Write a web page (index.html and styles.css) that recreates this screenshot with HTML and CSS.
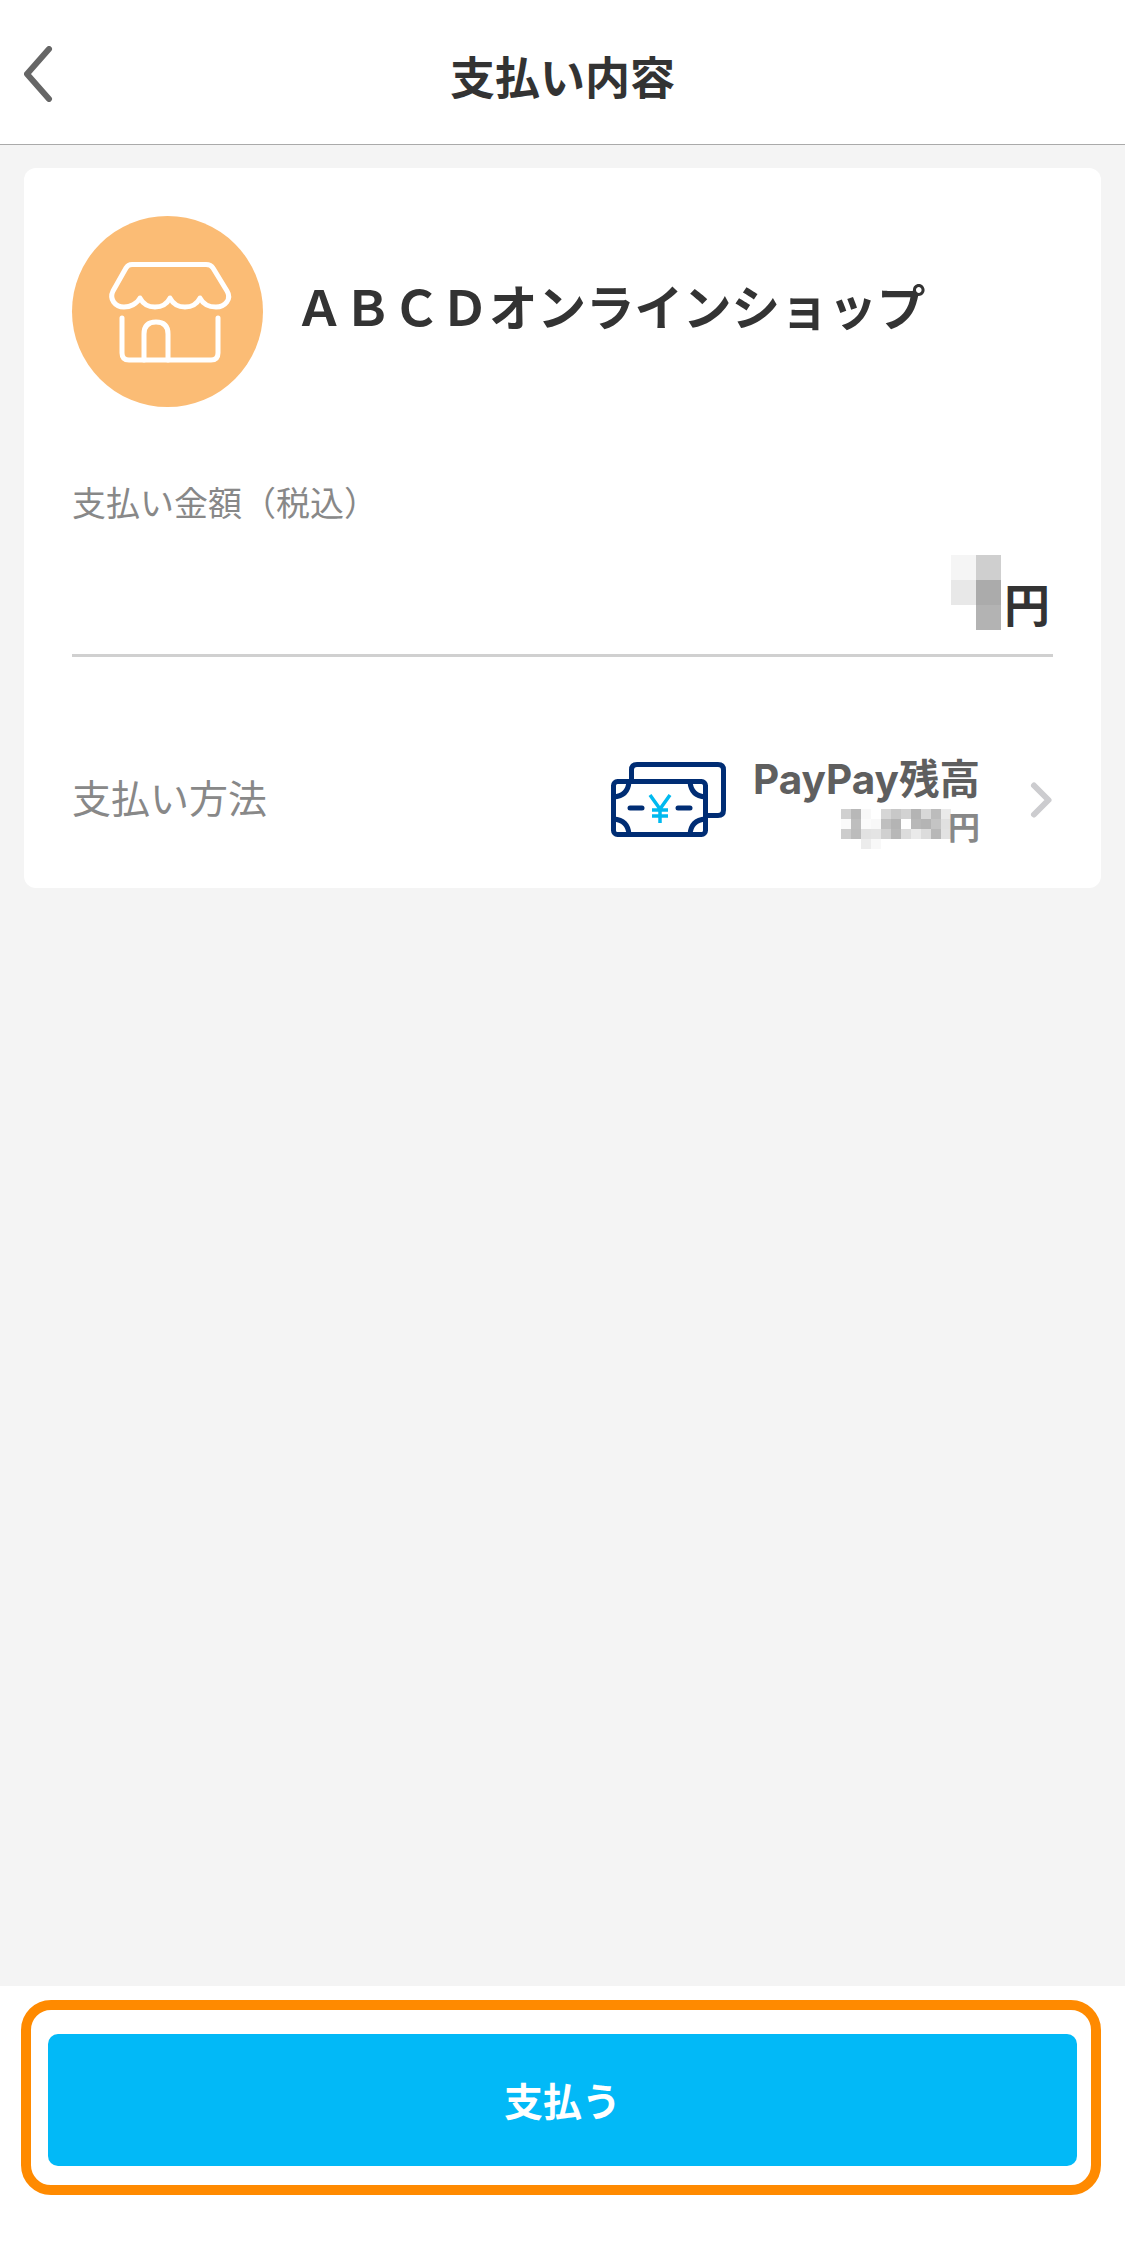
FILE: index.html
```html
<!DOCTYPE html>
<html lang="ja">
	<head>
		<title>支払い内容</title>
		<link rel="stylesheet" href="styles.css">
	</head>
	<body>
		<div class="page">
			<header class="top">
				<svg class="back" width="30" height="56" viewBox="0 0 30 56">
					<path d="M25 3 L3 28 L25 53" fill="none" stroke="#666" stroke-width="6" stroke-linecap="round" stroke-linejoin="round"/>
				</svg>
				<h1 class="title">支払い内容</h1>
			</header>

			<main class="content">
				<section class="card">
					<div class="shop">
						<div class="shop-logo">
							<svg width="191" height="191" viewBox="0 0 191 191" fill="none" stroke="#fff" stroke-width="5" stroke-linecap="round" stroke-linejoin="round">
								<path d="M60 48.5 H134 Q139 48.5 141 52 L155 75 C160 83 153 91 144 91 C137 91 131 88 128 82 C125 88 119 91 113 91 C107 91 101 88 98 82 C95 88 89 91 83 91 C77 91 71 88 68 82 C65 88 58 91 52 91 C43 91 37 83 41 75 L54 52 Q56 48.5 60 48.5 Z"/>
								<path d="M50 102 V137 Q50 144 57 144 H139 Q146 144 146 137 V102"/>
								<path d="M72 144 V118 Q72 106 84 106 Q96 106 96 118 V144"/>
							</svg>
						</div>
						<div class="shop-name">ＡＢＣＤオンラインショップ</div>
					</div>

					<div class="amount-label">支払い金額（税込）</div>
					<div class="amount">
						<svg class="mosaic" width="50" height="75" viewBox="0 0 2 3" shape-rendering="crispEdges">
							<rect x="0" y="0" width="1" height="1" fill="#f5f5f5"/>
							<rect x="1" y="0" width="1" height="1" fill="#cfcfcf"/>
							<rect x="0" y="1" width="1" height="1" fill="#e8e8e8"/>
							<rect x="1" y="1" width="1" height="1" fill="#ababab"/>
							<rect x="1" y="2" width="1" height="1" fill="#b3b3b3"/>
						</svg>
						<span class="yen-big">円</span>
					</div>

					<div class="method">
						<div class="method-label">支払い方法</div>
						<div class="method-value">
							<svg class="cash" width="120" height="80" viewBox="0 0 120 80" fill="none" stroke="#002d74" stroke-width="5" stroke-linecap="round" stroke-linejoin="round">
								<path d="M22.5 21 V10 Q22.5 4.5 28 4.5 H109 Q114.5 4.5 114.5 10 V50 Q114.5 55.5 109 55.5 H97"/>
								<rect x="4.5" y="21.5" width="92" height="53" rx="4"/>
								<path d="M4.5 37 Q19 36 20 21.5"/>
								<path d="M96.5 37 Q82 36 81 21.5"/>
								<path d="M4.5 59 Q19 60 20 74.5"/>
								<path d="M96.5 59 Q82 60 81 74.5"/>
								<path d="M21 48 H33"/>
								<path d="M69 48 H81"/>
								<path d="M41 35 L51 49 L61 35 M51 49 V63 M43 50 H59 M43 56 H59" stroke="#00b9ef" stroke-width="3.5" stroke-linecap="butt"/>
							</svg>
							<div class="balance">
								<div class="balance-name">PayPay残高</div>
								<div class="balance-amount">
									<svg class="mosaic-small" width="110" height="40" viewBox="0 0 11 4" shape-rendering="crispEdges">
										<rect x="0" y="0" width="1" height="1" fill="#d0d0d0"/>
										<rect x="1" y="0" width="1" height="1" fill="#b8b8b8"/>
										<rect x="2" y="0" width="1" height="1" fill="#f8f8f8"/>
										<rect x="4" y="0" width="1" height="1" fill="#d6d6d6"/>
										<rect x="5" y="0" width="1" height="1" fill="#c8c8c8"/>
										<rect x="6" y="0" width="1" height="1" fill="#d2d2d2"/>
										<rect x="7" y="0" width="1" height="1" fill="#b4b4b4"/>
										<rect x="8" y="0" width="1" height="1" fill="#d8d8d8"/>
										<rect x="9" y="0" width="1" height="1" fill="#bcbcbc"/>
										<rect x="10" y="0" width="1" height="1" fill="#eaeaea"/>
										<rect x="0" y="1" width="1" height="1" fill="#fafafa"/>
										<rect x="1" y="1" width="1" height="1" fill="#bebebe"/>
										<rect x="2" y="1" width="1" height="1" fill="#fbfbfb"/>
										<rect x="3" y="1" width="1" height="1" fill="#f8f8f8"/>
										<rect x="4" y="1" width="1" height="1" fill="#bfbfbf"/>
										<rect x="5" y="1" width="1" height="1" fill="#b4b4b4"/>
										<rect x="7" y="1" width="1" height="1" fill="#b8b8b8"/>
										<rect x="8" y="1" width="1" height="1" fill="#b4b4b4"/>
										<rect x="9" y="1" width="1" height="1" fill="#c4c4c4"/>
										<rect x="10" y="1" width="1" height="1" fill="#e0e0e0"/>
										<rect x="0" y="2" width="1" height="1" fill="#cccccc"/>
										<rect x="1" y="2" width="1" height="1" fill="#bcbcbc"/>
										<rect x="2" y="2" width="1" height="1" fill="#e2e2e2"/>
										<rect x="3" y="2" width="1" height="1" fill="#e4e4e4"/>
										<rect x="4" y="2" width="1" height="1" fill="#d0d0d0"/>
										<rect x="5" y="2" width="1" height="1" fill="#b8b8b8"/>
										<rect x="6" y="2" width="1" height="1" fill="#dcdcdc"/>
										<rect x="7" y="2" width="1" height="1" fill="#eaeaea"/>
										<rect x="8" y="2" width="1" height="1" fill="#dcdcdc"/>
										<rect x="9" y="2" width="1" height="1" fill="#b8b8b8"/>
										<rect x="10" y="2" width="1" height="1" fill="#e2e2e2"/>
										<rect x="2" y="3" width="1" height="1" fill="#ececec"/>
										<rect x="3" y="3" width="1" height="1" fill="#f8f8f8"/>
									</svg>
									<span class="yen-small">円</span>
								</div>
							</div>
							<svg class="next" width="24" height="40" viewBox="0 0 24 40">
								<path d="M5 5.5 L19.5 20 L5 34.5" fill="none" stroke="#cccccf" stroke-width="6" stroke-linecap="round" stroke-linejoin="round"/>
							</svg>
						</div>
					</div>
				</section>
			</main>

			<footer class="bottom">
				<div class="highlight">
					<button class="pay">支払う</button>
				</div>
			</footer>
		</div>
	</body>
</html>
```

FILE: styles.css
```css
* {box-sizing: border-box;}
html, body {margin: 0; padding: 0;}
body {
	background: #fff;
	color: #333;
	font-family: "Noto Sans CJK JP", "Noto Sans", sans-serif;
}
.page {
	display: flex;
	flex-direction: column;
	width: 1125px;
	height: 2244px;
}

/* header */
.top {
	display: grid;
	grid-template-columns: 1fr auto 1fr;
	align-items: center;
	height: 145px;
	padding-top: 8px;
	background: #fff;
	border-bottom: 1px solid #aaa;
}
.title {
	grid-column: 2;
	grid-row: 1;
	margin: 0;
	font-size: 45px;
	line-height: 60px;
	font-weight: 700;
}
.back {
	grid-column: 1;
	grid-row: 1;
	margin: 0 0 4px 24px;
}

/* card */
.content {
	flex: 1;
	padding: 23px 24px 0;
	background: #f4f4f4;
}
.card {
	padding: 48px 48px 39px;
	background: #fff;
	border-radius: 12px;
}
.shop {
	display: flex;
	align-items: center;
	gap: 32px;
}
.shop-logo {
	width: 191px;
	height: 191px;
	background: #fbbc75;
	border-radius: 50%;
}
.shop-name {
	padding-bottom: 14px;
	font-size: 48.5px;
	line-height: 60px;
	font-weight: 700;
}
.amount-label {
	margin-top: 73px;
	font-size: 34px;
	line-height: 44px;
	color: #888;
}
.amount {
	display: flex;
	justify-content: flex-end;
	align-items: flex-end;
	height: 133px;
	padding-bottom: 24px;
	border-bottom: 3px solid #d0d0d0;
}
.yen-big {
	margin: 0 3px 5px 3px;
	font-size: 46px;
	line-height: 46px;
	font-weight: 700;
}

/* payment method */
.method {
	display: flex;
	justify-content: space-between;
	align-items: center;
	margin-top: 94px;
}
.method-label {
	padding-bottom: 8px;
	font-size: 39px;
	line-height: 56px;
	color: #888;
}
.method-value {
	display: flex;
	align-items: center;
}
.cash {margin-right: 24px;}
.balance {
	display: flex;
	flex-direction: column;
	align-items: flex-end;
}
.balance-name {
	font-family: Inter, "Noto Sans CJK JP", sans-serif;
	font-size: 40.5px;
	line-height: 58px;
	font-weight: 700;
	color: #5f5f5f;
}
.balance-amount {
	display: flex;
	align-items: flex-start;
	height: 40px;
}
.mosaic-small {margin-right: -3px;}
.yen-small {
	font-size: 32px;
	line-height: 32px;
	font-weight: 700;
	color: #888;
}
.next {margin-left: 49px;}

/* bottom button */
.bottom {
	height: 258px;
	padding: 14px 24px 49px 21px;
	background: #fff;
}
.highlight {
	padding: 24px 14px 19px 17px;
	border: 10px solid #ff8a00;
	border-radius: 30px;
}
.pay {
	display: block;
	width: 100%;
	height: 132px;
	padding: 0 0 2px;
	background: #02b9f7;
	border: none;
	border-radius: 10px;
	color: #fff;
	font-family: inherit;
	font-size: 39px;
	font-weight: 700;
}
```
